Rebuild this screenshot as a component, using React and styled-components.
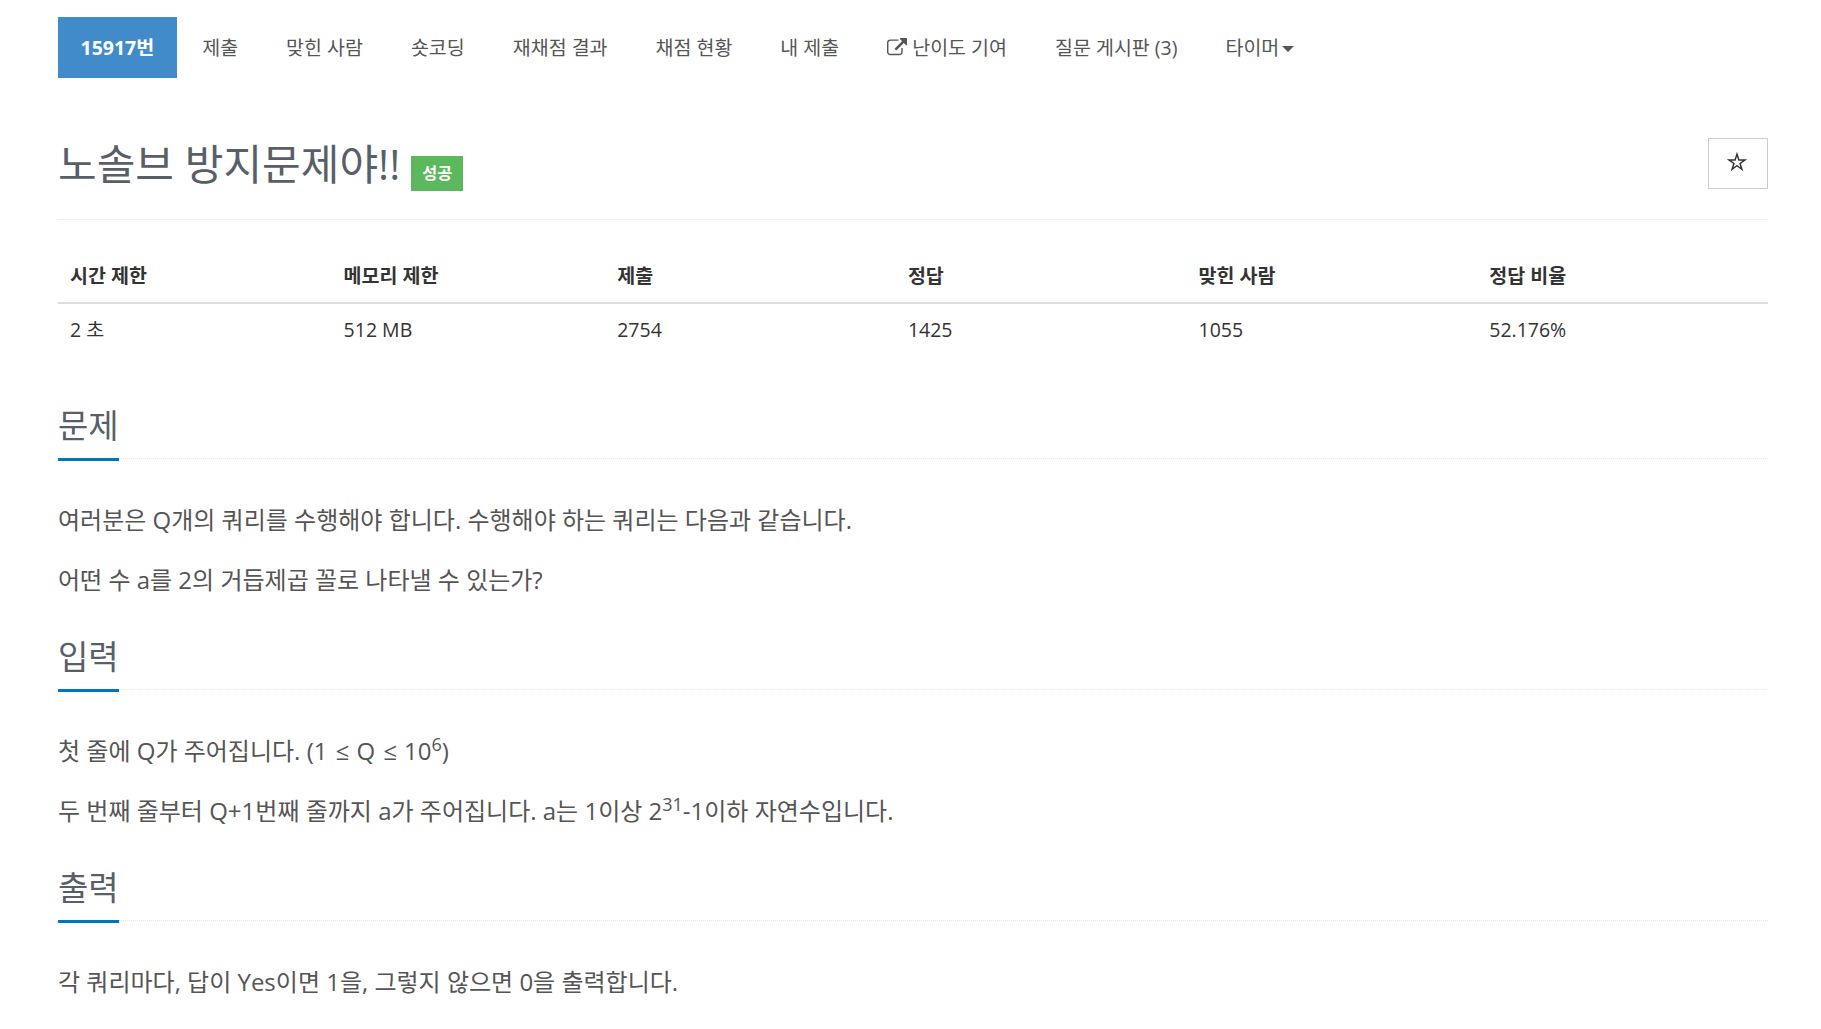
import React from 'react'
import styled, { createGlobalStyle } from 'styled-components'

const GlobalStyle = createGlobalStyle`
    * {
        box-sizing: border-box;
    }
    body {
        margin: 0;
        background-color: #fff;
        color: #333;
        font-family: 'Open Sans', 'Noto Sans CJK KR', sans-serif;
        font-size: 19.5px;
        line-height: 1.6;
    }
`

const Container = styled.div`
    width: 1710px;
    margin-left: 58px;
    padding-top: 17px;
`

const Menu = styled.ul`
    display: flex;
    gap: 3px;
    height: 61px;
    margin: 0;
    padding: 0;
    list-style: none;
`

const MenuLink = styled.a`
    display: flex;
    align-items: center;
    height: 61px;
    padding: 0 22.5px;
    color: ${(props) => (props.$active ? '#fff' : '#555')};
    background-color: ${(props) => (props.$active ? '#428bca' : 'transparent')};
    font-weight: ${(props) => (props.$active ? 700 : 400)};
    white-space: nowrap;
`

const LinkIcon = styled.svg`
    width: 20px;
    height: 20px;
    margin-right: 5px;
    fill: currentColor;
`

const Caret = styled.span`
    margin: 3px 0 0 3px;
    border-top: 6px solid;
    border-right: 6px solid transparent;
    border-left: 6px solid transparent;
`

const PageHeader = styled.header`
    display: flex;
    justify-content: space-between;
    height: 142px;
    padding-top: 60px;
    border-bottom: 1px solid #eee;
`

const Title = styled.h1`
    display: flex;
    margin: 0;
    color: #585f69;
    font-size: 42px;
    font-weight: 400;
    line-height: 52px;
`

const Label = styled.span`
    height: 35px;
    margin: 18px 0 0 11px;
    padding: 0 11px;
    background-color: #5cb85c;
    color: #fff;
    font-size: 16.3px;
    font-weight: 700;
    line-height: 35px;
`

const StarButton = styled.button`
    display: flex;
    align-items: center;
    justify-content: center;
    width: 60px;
    height: 51px;
    padding: 0 2px 4px 0;
    border: 1px solid #ccc;
    background-color: #fff;
    color: #333;
`

const InfoTable = styled.table`
    width: 100%;
    margin-top: 28px;
    border-collapse: collapse;
    table-layout: fixed;
`

const HeadCell = styled.th`
    width: ${(props) => props.$width};
    height: 55px;
    padding: 1px 12px 0;
    border-bottom: 2px solid #ddd;
    font-weight: 700;
    text-align: left;
`

const Cell = styled.td`
    height: 52px;
    padding: 0 12px;
`

const Sections = styled.div`
    padding-top: 46px;
`

const Section = styled.section`
    height: 231px;

    &:last-child {
        height: auto;
    }
`

const Headline = styled.div`
    display: flex;
    height: 58px;
    border-bottom: 1px dotted #e4e9f0;
`

const HeadlineText = styled.h2`
    height: 60px;
    margin: 0;
    border-bottom: 3px solid #0076c0;
    color: #585f69;
    font-size: 33px;
    font-weight: 400;
    line-height: 49px;
`

const Description = styled.div`
    padding-top: 42px;
    color: #555;
    font-size: 24px;
`

const Paragraph = styled.p`
    margin: 0 0 22px;
    line-height: 38px;

    &:last-child {
        margin-bottom: 0;
    }
`

const Sup = styled.sup`
    position: relative;
    top: -0.5em;
    font-size: 75%;
    line-height: 0;
    vertical-align: baseline;
`

const Operator = styled.span`
    padding: 0 0.6px 0 2.2px;
`

const ExternalLink = () => (
    <LinkIcon viewBox='0 0 1792 1792'>
        <path d='M1408 928v320q0 119-84.5 203.5t-203.5 84.5h-832q-119 0-203.5-84.5t-84.5-203.5v-832q0-119 84.5-203.5t203.5-84.5h704q14 0 23 9t9 23v64q0 14-9 23t-23 9h-704q-66 0-113 47t-47 113v832q0 66 47 113t113 47h832q66 0 113-47t47-113v-320q0-14 9-23t23-9h64q14 0 23 9t9 23zm384-864v512q0 26-19 45t-45 19-45-19l-176-176-652 652q-10 10-23 10t-23-10l-114-114q-10-10-10-23t10-23l652-652-176-176q-19-19-19-45t19-45 45-19h512q26 0 45 19t19 45z' />
    </LinkIcon>
)

const Star = () => (
    <svg width='22' height='21' viewBox='0 0 22 21' fill='currentColor' fillRule='evenodd'>
        <path d='M11 .7 13.4 8.2H21.3L14.9 12.8 17.3 20.2 11 15.6 4.7 20.2 7.1 12.8 .7 8.2H8.6Z M11 5.5 12.35 9.65H16.7L13.2 12.2 14.5 16.4 11 13.8 7.5 16.4 8.8 12.2 5.3 9.65H9.65Z' />
    </svg>
)

const menus = [
    { name: '15917번', active: true },
    { name: '제출' },
    { name: '맞힌 사람' },
    { name: '숏코딩' },
    { name: '재채점 결과' },
    { name: '채점 현황' },
    { name: '내 제출' },
    { name: '난이도 기여', external: true },
    { name: '질문 게시판 (3)' },
    { name: '타이머', dropdown: true },
]

const infos = [
    { title: '시간 제한', value: '2 초', width: '16%' },
    { title: '메모리 제한', value: '512 MB', width: '16%' },
    { title: '제출', value: '2754', width: '17%' },
    { title: '정답', value: '1425', width: '17%' },
    { title: '맞힌 사람', value: '1055', width: '17%' },
    { title: '정답 비율', value: '52.176%', width: '17%' },
]

const ProblemSection = (props) => (
    <Section>
        <Headline>
            <HeadlineText>{props.title}</HeadlineText>
        </Headline>
        <Description>{props.children}</Description>
    </Section>
)

const App = () => (
    <Container>
        <GlobalStyle />
        <Menu>
            {menus.map((menu) => (
                <li key={menu.name}>
                    <MenuLink $active={menu.active}>
                        {menu.external && <ExternalLink />}
                        {menu.name}
                        {menu.dropdown && <Caret />}
                    </MenuLink>
                </li>
            ))}
        </Menu>
        <PageHeader>
            <Title>
                노솔브 방지문제야!!
                <Label>성공</Label>
            </Title>
            <StarButton aria-label='즐겨찾기'><Star /></StarButton>
        </PageHeader>
        <InfoTable>
            <thead>
                <tr>
                    {infos.map((info) => <HeadCell key={info.title} $width={info.width}>{info.title}</HeadCell>)}
                </tr>
            </thead>
            <tbody>
                <tr>
                    {infos.map((info) => <Cell key={info.title}>{info.value}</Cell>)}
                </tr>
            </tbody>
        </InfoTable>
        <Sections>
            <ProblemSection title='문제'>
                <Paragraph>여러분은 Q개의 쿼리를 수행해야 합니다. 수행해야 하는 쿼리는 다음과 같습니다.</Paragraph>
                <Paragraph>어떤 수 a를 2의 거듭제곱 꼴로 나타낼 수 있는가?</Paragraph>
            </ProblemSection>
            <ProblemSection title='입력'>
                <Paragraph>첫 줄에 Q가 주어집니다. (1 <Operator>≤</Operator> Q <Operator>≤</Operator> 10<Sup>6</Sup>)</Paragraph>
                <Paragraph>두 번째 줄부터 Q+1번째 줄까지 a가 주어집니다. a는 1이상 2<Sup>31</Sup>-1이하 자연수입니다.</Paragraph>
            </ProblemSection>
            <ProblemSection title='출력'>
                <Paragraph>각 쿼리마다, 답이 Yes이면 1을, 그렇지 않으면 0을 출력합니다.</Paragraph>
            </ProblemSection>
        </Sections>
    </Container>
)

export default App;
